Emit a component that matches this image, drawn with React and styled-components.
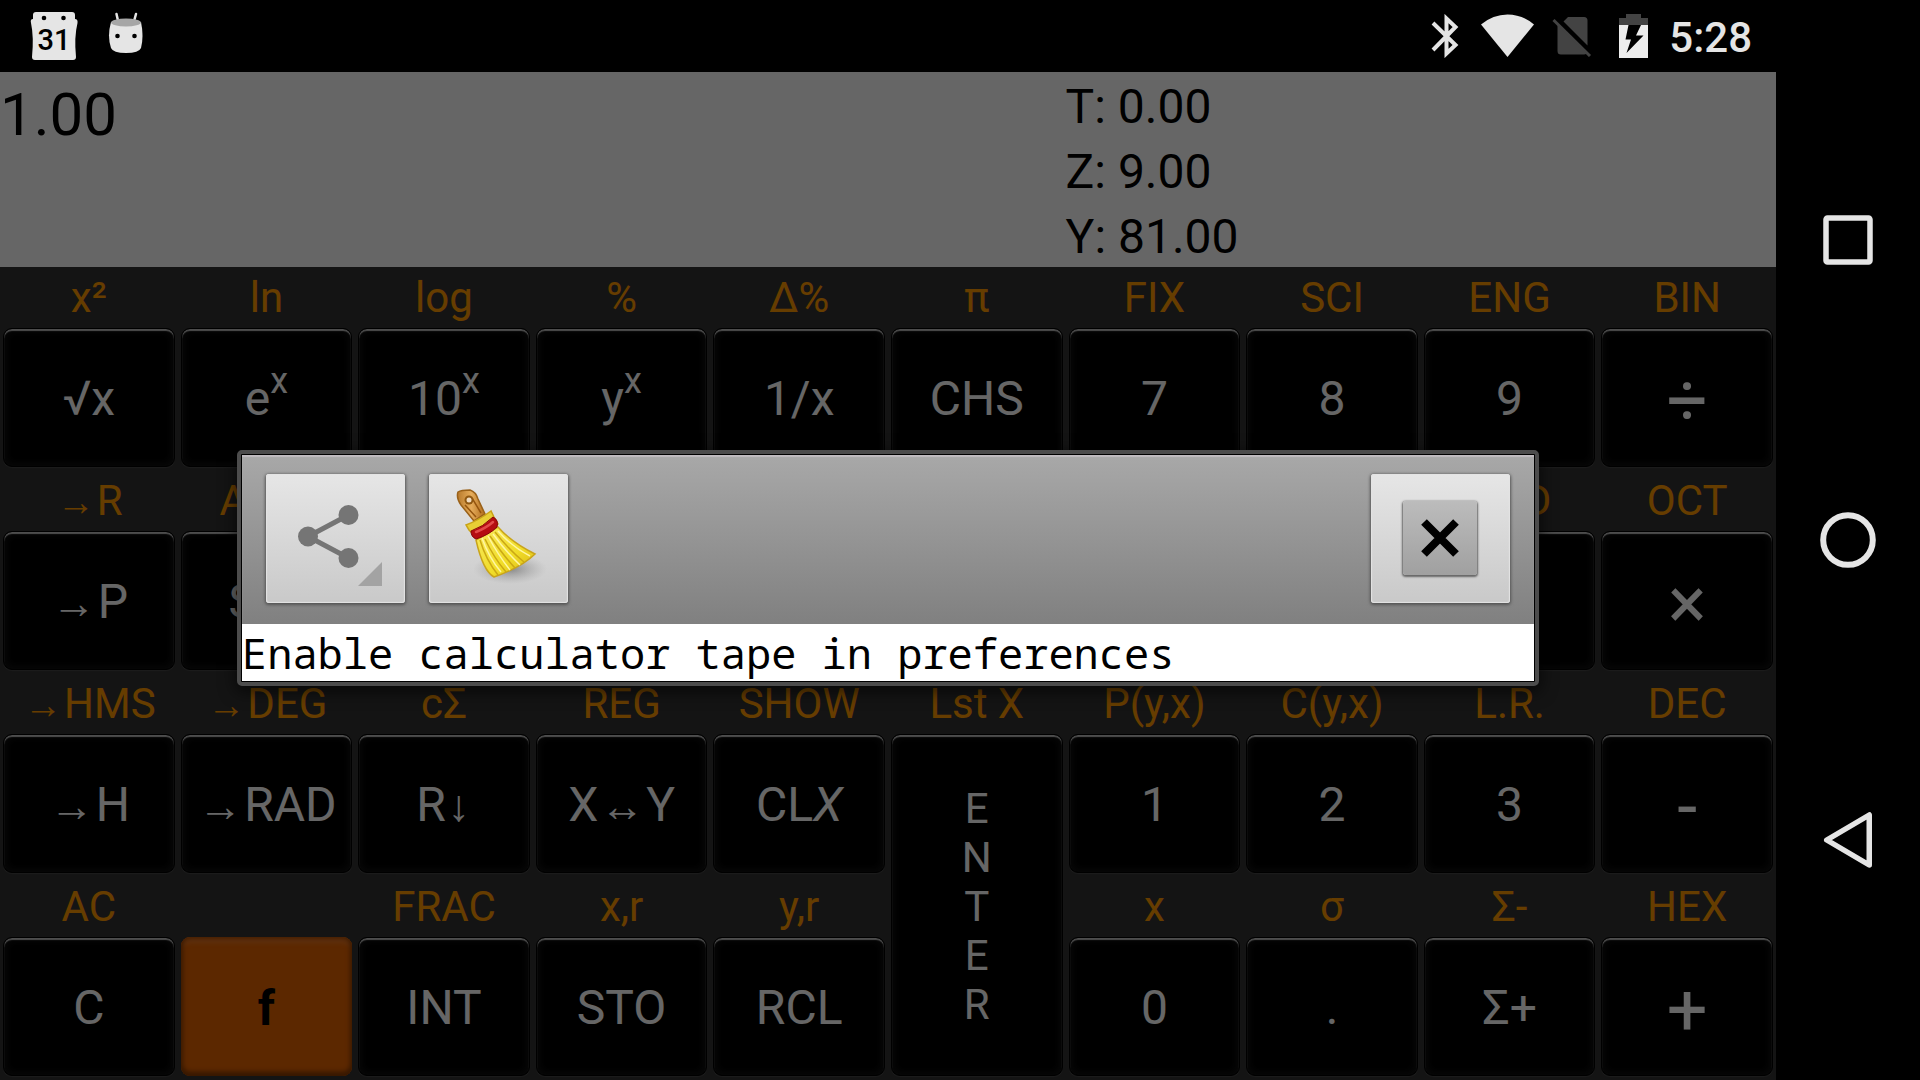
import React from 'react';
import styled, { createGlobalStyle, css } from 'styled-components';

const GlobalStyle = createGlobalStyle`
  * { box-sizing: border-box; }
  html, body, #root { height: 100%; margin: 0; }
  body { background: #000; overflow: hidden; font-family: Roboto, "Noto Sans", sans-serif; }
  button { margin: 0; padding: 0; border: 0; font: inherit; color: inherit; background: none; }
`;

const Screen = styled.div`
  display: flex;
  height: 100vh;
  background: #000;
`;

const Main = styled.div`
  flex: 1;
  min-width: 0;
  display: flex;
  flex-direction: column;
`;

const StatusBar = styled.header`
  flex: none;
  height: 72px;
  display: flex;
  align-items: center;
  justify-content: space-between;
  padding: 0 24px 0 30px;
  color: #e5e5e5;
`;

const StatusGroup = styled.div`
  display: flex;
  align-items: center;
  gap: ${(p) => p.$gap}px;
`;

const Clock = styled.time`
  padding-top: 4px;
  font-size: 42px;
  line-height: 50px;
  font-weight: 500;
`;

const Workspace = styled.div`
  position: relative;
  flex: 1;
  min-height: 0;
  display: flex;
  flex-direction: column;
  background: #333;
`;

const Display = styled.section`
  flex: none;
  display: grid;
  grid-template-columns: 3fr 2fr;
  background: #fff;
  color: #000;
`;

const XRegister = styled.output`
  padding-top: 8px;
  font-size: 60px;
  line-height: 70px;
`;

const Stack = styled.div`
  display: flex;
  flex-direction: column;
`;

const Register = styled.output`
  padding-top: 4px;
  font-size: 48px;
  line-height: 61px;
`;

const Keypad = styled.main`
  flex: 1;
  min-height: 0;
  display: grid;
  grid-template-columns: repeat(10, minmax(0, 1fr));
  grid-template-rows: repeat(4, minmax(0, 1fr));
  padding-top: 1px;
`;

const Cell = styled.div`
  display: flex;
  flex-direction: column;
  grid-row: span ${(p) => p.$rows || 1};
`;

const Shift = styled.div`
  flex: none;
  height: 60px;
  font-size: 42px;
  line-height: 60px;
  text-align: center;
  white-space: nowrap;
  color: #ff9800;
`;

const darkKey = css`
  border: 1px solid #000;
  background: #000;
  color: #fff;
  box-shadow: inset 0 2px 1px #c0c0c0, inset 0 0 8px 2px #161616, 0 1px 1px #484848;
`;

const orangeKey = css`
  background: #e66400;
  color: #000;
  font-weight: 700;
  box-shadow: inset 0 -4px 5px #8c3c00, inset 0 0 5px 2px #a84a00, inset 0 6px 4px #f07c2a;
`;

const Key = styled.button`
  flex: 1;
  margin: 0 3px 4px;
  border-radius: 9px;
  text-align: center;
  white-space: nowrap;
  font-size: ${(p) => p.$size || 48}px;
  line-height: ${(p) => p.$line || 56}px;
  ${(p) => (p.$orange ? orangeKey : darkKey)}
  padding-top: ${(p) => (p.$size === 72 ? 7 : p.$orange ? 4 : 2)}px;
`;

const Sup = styled.sup`
  font-size: 36px;
  line-height: 0;
  vertical-align: 22px;
`;

const Letter = styled.span`
  display: block;
`;

const Arrow = styled.span`
  display: inline-block;
  width: ${(p) => (p.$narrow ? 26 : p.$small ? 42 : 48)}px;
  text-align: center;
  font-family: "Liberation Serif", serif;
  font-size: ${(p) => (p.$small ? 38 : 44)}px;
  line-height: 1;
`;

const Backdrop = styled.div`
  position: absolute;
  inset: 0;
  display: flex;
  align-items: center;
  justify-content: center;
  padding-bottom: 16px;
  background: rgba(0, 0, 0, 0.6);
`;

const Dialog = styled.section`
  width: 1302px;
  max-width: 92%;
  padding: 1px;
  border: 4px solid #4c4c4c;
  border-radius: 5px;
  background: #000;
  box-shadow: 0 4px 16px 2px rgba(0, 0, 0, 0.6);
`;

const Toolbar = styled.div`
  display: flex;
  gap: 24px;
  padding: 19px 24px 21px;
  background: linear-gradient(#a8a8a8, #808080);
  box-shadow: inset 0 2px 1px #c0bcc0;
`;

const ToolButton = styled.button`
  width: 139px;
  height: 129px;
  display: flex;
  align-items: center;
  justify-content: center;
  border-radius: 3px;
  background: linear-gradient(#e6e6e6, #c9c9c9);
  box-shadow: inset 0 0 1px 1px #e4e4e4, 0 1px 3px 1px #555;
  margin-left: ${(p) => (p.$end ? 'auto' : 0)};
  padding: ${(p) => (p.$end ? '0 2px 2px 0' : 0)};
`;

const CloseBox = styled.span`
  width: 74px;
  height: 74px;
  display: flex;
  align-items: center;
  justify-content: center;
  border-radius: 3px;
  background: linear-gradient(#bcbcbc, #a0a0a0);
  box-shadow: 0 1px 2px 1px #666;
`;

const Tape = styled.p`
  margin: 0;
  padding-top: 1px;
  background: #fff;
  color: #000;
  font-family: "Droid Sans Mono", "Noto Sans Mono", "DejaVu Sans Mono", monospace;
  font-size: 42px;
  line-height: 56px;
  white-space: nowrap;
  overflow: hidden;
`;

const NavBar = styled.nav`
  flex: none;
  width: 144px;
  display: flex;
  flex-direction: column;
  padding: 90px 0;
`;

const NavButton = styled.button`
  flex: 1;
  display: flex;
  align-items: center;
  justify-content: center;
`;

const To = ({ small }) => <Arrow $small={small}>→</Arrow>;

const keys = [
  ['x²', '√x'],
  ['ln', <>e<Sup>x</Sup></>],
  ['log', <>10<Sup>x</Sup></>],
  ['%', <>y<Sup>x</Sup></>],
  ['Δ%', '1/x'],
  ['π', 'CHS'],
  ['FIX', '7'],
  ['SCI', '8'],
  ['ENG', '9'],
  ['BIN', '÷', { size: 72 }],

  [<><To small />R</>, <><To />P</>],
  ['ASIN', 'SIN'],
  ['', ''],
  ['', ''],
  ['', ''],
  ['', ''],
  ['', ''],
  ['', ''],
  ['RND', ''],
  ['OCT', '×', { size: 72 }],

  [<><To small />HMS</>, <><To />H</>],
  [<><To small />DEG</>, <><To />RAD</>],
  ['cΣ', <>R<Arrow $narrow>↓</Arrow></>],
  ['REG', <>X<Arrow>↔</Arrow>Y</>],
  ['SHOW', <>CL<i>X</i></>],
  ['Lst X', 'ENTER'.split('').map((c, i) => <Letter key={i}>{c}</Letter>), { rows: 2, size: 42, line: 49 }],
  ['P(y,x)', '1'],
  ['C(y,x)', '2'],
  ['L.R.', '3'],
  ['DEC', '-', { size: 72 }],

  ['AC', 'C'],
  ['', 'f', { orange: true }],
  ['FRAC', 'INT'],
  ['x,r', 'STO'],
  ['y,r', 'RCL'],
  ['x', '0'],
  ['σ', '.'],
  ['Σ-', 'Σ+'],
  ['HEX', '+', { size: 72 }],
];

const CalendarIcon = () => (
  <svg width="48" height="48" viewBox="0 0 48 48" aria-hidden="true">
    <path fill="#e5e5e5" d="M6 0H42Q45 0 45 3V7Q48 7 47.500 11Q44 25 46 45Q46 48 43 48H5Q2 48 2 45Q4 25 1 11Q0 7 3 7V3Q3 0 6 0Z" />
    <circle cx="14" cy="6" r="2.300" />
    <circle cx="33.500" cy="6" r="2.300" />
    <text x="24" y="38" textAnchor="middle" fontFamily="Roboto" fontWeight="500" fontSize="29">31</text>
  </svg>
);

const DroidIcon = () => (
  <svg width="36" height="48" viewBox="0 0 36 48" aria-hidden="true">
    <path d="M8.500 2L10.500 11M28 2L25.500 11" stroke="#e5e5e5" strokeWidth="2.500" strokeLinecap="round" />
    <path fill="#e5e5e5" d="M3 10H33Q36 24 33 36Q31 41 18 41Q5 41 3 36Q-1 24 3 10Z" />
    <ellipse cx="18" cy="10.500" rx="15" ry="4" fill="#a6a6a6" />
    <circle cx="9.500" cy="24" r="2.300" />
    <circle cx="26.500" cy="24" r="2.300" />
  </svg>
);

const BluetoothIcon = () => (
  <svg width="33" height="44" viewBox="0 0 33 44" fill="none" stroke="#e5e5e5" strokeWidth="4" aria-hidden="true">
    <path d="M2 9L24.500 31L15.500 39.500V4.500L24.500 13L2 36" />
  </svg>
);

const WifiIcon = () => (
  <svg width="54" height="44" viewBox="0 0 54 44" aria-hidden="true">
    <path fill="#e5e5e5" d="M0 10.500Q12 0.500 26.500 0.500Q41 0.500 53 10.500L26.500 43Z" />
  </svg>
);

const NoSimIcon = () => (
  <svg width="50" height="42" viewBox="0 0 50 42" aria-hidden="true">
    <path fill="#434343" d="M5.500 10L34.500 38.500Q33.500 39.500 32 39.500H9Q5.500 39.500 5.500 36ZM11.500 6.500L16 2H32Q35.500 2 35.500 5.500V30.500Z" />
    <path d="M1.500 5L38 41" stroke="#434343" strokeWidth="3" />
  </svg>
);

const BatteryIcon = () => (
  <svg width="33" height="44" viewBox="0 0 33 44" aria-hidden="true">
    <path fill="#434343" d="M7 0H22V4H29V11H0V4H7Z" />
    <path fill="#ededed" d="M0 11H29V44H0Z" />
    <path d="M9.500 11H22L17 21.500H24.500L7.500 39L12 25.500H6.500Z" />
  </svg>
);

const ShareIcon = () => (
  <svg width="139" height="129" viewBox="0 0 139 129" aria-hidden="true">
    <path d="M82.500 41L42 62.500L82.500 84" fill="none" stroke="#757575" strokeWidth="5" />
    <g fill="#757575">
      <circle cx="82.500" cy="41" r="10" />
      <circle cx="42" cy="62.500" r="10" />
      <circle cx="82.500" cy="84" r="10" />
    </g>
    <path d="M92 112L116 88V112Z" fill="#a3a3a3" />
  </svg>
);

const BroomIcon = () => (
  <svg width="139" height="129" viewBox="0 0 139 129" aria-hidden="true">
    <defs>
      <radialGradient id="broomShade">
        <stop offset="0" stopColor="#666" stopOpacity="0.7" />
        <stop offset="1" stopColor="#999" stopOpacity="0" />
      </radialGradient>
      <linearGradient id="straw" x1="0" y1="0" x2="1" y2="1">
        <stop offset="0" stopColor="#f9ea60" />
        <stop offset="0.600" stopColor="#f0dc28" />
        <stop offset="1" stopColor="#d8b414" />
      </linearGradient>
      <linearGradient id="wood" x1="0" y1="0" x2="1" y2="0">
        <stop offset="0" stopColor="#b87a2c" />
        <stop offset="0.500" stopColor="#e6ac5a" />
        <stop offset="1" stopColor="#b06c1c" />
      </linearGradient>
    </defs>
    <ellipse cx="81" cy="95" rx="37" ry="15" fill="url(#broomShade)" />
    <path d="M29 18Q32 16 41 16Q47 18 49 25L56 40L45 47L32 31Q27 24 29 18Z" fill="url(#wood)" stroke="#9a6118" strokeWidth="1.500" />
    <path d="M36 31L47 43M43 24L52 39" stroke="#95550f" strokeWidth="1.500" />
    <circle cx="40" cy="26" r="4.500" fill="#8f5711" />
    <circle cx="40" cy="26" r="2.500" fill="#f1dcc0" />
    <path d="M37 51Q50 46 62 37L65 43L69 50L45 61L40 56Z" fill="#e8cf35" stroke="#c9a318" strokeWidth="1.500" />
    <path d="M69 53Q82 68 106 80Q93 93 65 103Q54 97 47 66Z" fill="url(#straw)" stroke="#c9a41a" strokeWidth="1.500" />
    <path d="M51 66Q57 86 69 101M56 65Q65 84 77 98M61 62Q74 81 86 94M66 58Q80 76 95 88" fill="none" stroke="#cba814" strokeWidth="1.500" />
    <path d="M53 64Q60 84 72 98M59 62Q69 81 81 96M64 60Q77 78 91 91M69 57Q83 73 101 82" fill="none" stroke="#fff6a2" strokeWidth="1.500" />
    <path d="M42 57Q54 53 64 43Q70 46 68 53Q60 61 47 65Q42 63 42 57Z" fill="#b50c12" stroke="#860408" strokeWidth="1" />
    <path d="M47 58Q57 54 64 48" fill="none" stroke="#e24a4a" strokeWidth="2.500" strokeLinecap="round" />
  </svg>
);

const CloseIcon = () => (
  <svg width="38" height="38" viewBox="0 0 38 38" aria-hidden="true">
    <path d="M3 3L35 35M35 3L3 35" stroke="#000" strokeWidth="8" />
  </svg>
);

const RecentsIcon = () => (
  <svg width="56" height="56" viewBox="0 0 56 56" fill="none" stroke="#e5e5e5" strokeWidth="5.500" aria-hidden="true">
    <rect x="6" y="6" width="44" height="44" rx="1.500" />
  </svg>
);

const HomeIcon = () => (
  <svg width="56" height="56" viewBox="0 0 56 56" fill="none" stroke="#e5e5e5" strokeWidth="6" aria-hidden="true">
    <circle cx="28" cy="28" r="24.800" />
  </svg>
);

const BackIcon = () => (
  <svg width="56" height="56" viewBox="0 0 56 56" fill="none" stroke="#e5e5e5" strokeWidth="5.500" strokeLinejoin="round" aria-hidden="true">
    <path d="M6.750 28L49.250 3V53Z" />
  </svg>
);

export default function App() {
  return (
    <>
      <GlobalStyle />
      <Screen>
        <Main>
          <StatusBar>
            <StatusGroup $gap={30}>
              <CalendarIcon />
              <DroidIcon />
            </StatusGroup>
            <StatusGroup $gap={17}>
              <BluetoothIcon />
              <WifiIcon />
              <NoSimIcon />
              <BatteryIcon />
              <Clock>5:28</Clock>
            </StatusGroup>
          </StatusBar>
          <Workspace>
            <Display>
              <XRegister>1.00</XRegister>
              <Stack>
                <Register>T: 0.00</Register>
                <Register>Z: 9.00</Register>
                <Register>Y: 81.00</Register>
              </Stack>
            </Display>
            <Keypad>
              {keys.map(([shift, label, o = {}], i) => (
                <Cell key={i} $rows={o.rows}>
                  <Shift>{shift}</Shift>
                  <Key type="button" $size={o.size} $line={o.line} $orange={o.orange}>
                    {label}
                  </Key>
                </Cell>
              ))}
            </Keypad>
            <Backdrop>
              <Dialog role="dialog" aria-label="Calculator tape">
                <Toolbar>
                  <ToolButton type="button" aria-label="Share"><ShareIcon /></ToolButton>
                  <ToolButton type="button" aria-label="Clear"><BroomIcon /></ToolButton>
                  <ToolButton type="button" aria-label="Close" $end>
                    <CloseBox><CloseIcon /></CloseBox>
                  </ToolButton>
                </Toolbar>
                <Tape>Enable calculator tape in preferences</Tape>
              </Dialog>
            </Backdrop>
          </Workspace>
        </Main>
        <NavBar>
          <NavButton type="button" aria-label="Recent apps"><RecentsIcon /></NavButton>
          <NavButton type="button" aria-label="Home"><HomeIcon /></NavButton>
          <NavButton type="button" aria-label="Back"><BackIcon /></NavButton>
        </NavBar>
      </Screen>
    </>
  );
}
